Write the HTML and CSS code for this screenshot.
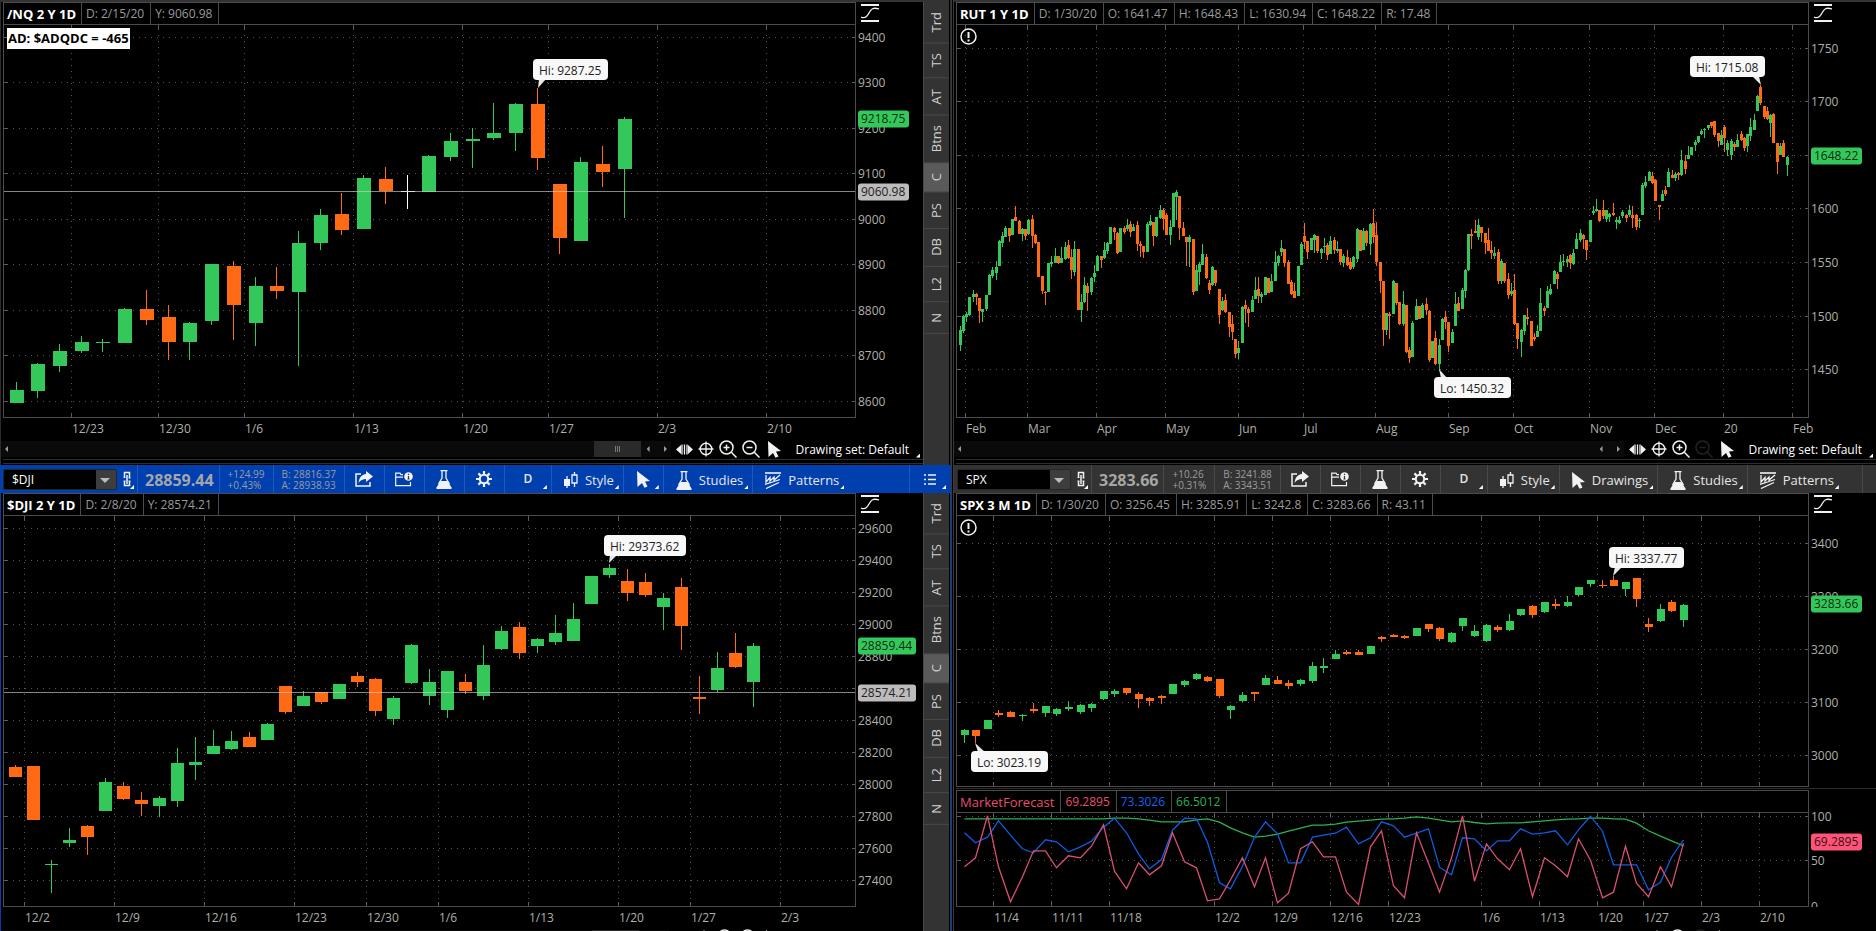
FILE: index.html
```html
<!DOCTYPE html>
<html lang="en">
<head>
<meta charset="utf-8">
<title>Charts</title>
<link rel="stylesheet" href="styles.css">
</head>
<body>
<svg class="symbols" aria-hidden="true">
  <symbol id="i-fit" viewBox="0 0 18 18"><path d="M0 1h18M0 17h18" stroke-width="2"/><path d="M0 13c4 2 6 0 8-4s4-6 10-4" stroke-width="1.3"/></symbol>
  <symbol id="i-link" viewBox="0 0 10 17"><path d="M2.5 6V1.5h5V7M2.5 10v4.500h5V10M5 4v9" stroke-width="1.5"/><path d="M1.500 6.500h2M1.500 10h2M6.500 7h2M6.500 10h2" stroke-width="1"/></symbol>
  <symbol id="i-share" viewBox="0 0 18 16"><path d="M6 3H1v12h14v-4" stroke-width="1.5"/><path class="f" d="M11 0l7 5.500-7 5.500V8C8 8 5.500 9 3.500 12 4 7 6.500 3.500 11 3z"/></symbol>
  <symbol id="i-folder" viewBox="0 0 18 15"><path d="M8 2.700H6L5 1.200H.7v12.500h14.800V10M1 5.200h7" stroke-width="1.200"/><circle class="f" cx="13.500" cy="4.500" r="4.300"/><path class="k" d="M13.500 4v3.500M13.500 1.700V3M12.500 7h2" stroke-width="1.200"/></symbol>
  <symbol id="i-flask" viewBox="0 0 16 19"><path d="M4.500.7h7M6 1v7L2.500 14M10 1v7l3.500 6" stroke-width="1.300"/><path class="f" d="M4.500 11h7l4 6.500V19H.5v-1.500z"/></symbol>
  <symbol id="i-gear" viewBox="0 0 16 16"><circle cx="8" cy="8" r="4.200" stroke-width="2"/><path d="M8 0v3.500M8 12.500V16M0 8h3.500M12.500 8H16M2.400 2.400l2.400 2.400M11.200 11.200l2.400 2.400M13.600 2.400l-2.400 2.400M4.800 11.200l-2.400 2.400" stroke-width="2.200"/></symbol>
  <symbol id="i-candle" viewBox="0 0 14 16"><path class="f" d="M0 7h6v7H0z"/><path d="M3 4v12M10.500 0v3M10.500 11v4M8 3h5v8H8z" stroke-width="1.300"/></symbol>
  <symbol id="i-cursor" viewBox="0 0 13 17"><path class="f" d="M0 0l13 10-5 .5 2.500 5-3 1.300L5 12l-4.500 4z"/></symbol>
  <symbol id="i-pattern" viewBox="0 0 16 17"><path d="M0 1h16" stroke-width="1.600"/><path d="M1 3v7l4-4.500V9l4-4v3l6-5M0 12.500l15-5M1 16.500l13-6" stroke-width="1.300"/></symbol>
  <symbol id="i-list" viewBox="0 0 12 11"><path d="M0 1h2M4 1h8M0 5.500h2M4 5.500h8M0 10h2M4 10h8" stroke-width="1.300"/></symbol>
  <symbol id="i-pan" viewBox="0 0 17 11"><path class="f" d="M0 5.500L5 1v9zM17 5.500L12 1v9z"/><path d="M6 .5v10M8.500 .5v10M11 .5v10" stroke-width="1.300"/></symbol>
  <symbol id="i-target" viewBox="0 0 16 16"><circle cx="8" cy="8" r="5.800" stroke-width="1.400"/><path d="M8 .5v15M.5 8h15" stroke-width="1.300"/></symbol>
  <symbol id="i-plus" viewBox="0 0 18 18"><circle cx="7.500" cy="7.500" r="6.500" stroke-width="1.500"/><path d="M12.300 12.300L17.500 17.500M4.500 7.500h6M7.500 4.500v6" stroke-width="1.500"/></symbol>
  <symbol id="i-minus" viewBox="0 0 18 18"><circle cx="7.500" cy="7.500" r="6.500" stroke-width="1.500"/><path d="M12.300 12.300L17.500 17.500M4.500 7.500h6" stroke-width="1.500"/></symbol>
  <symbol id="i-alert" viewBox="0 0 17 17"><circle cx="8.500" cy="8.500" r="7.500" stroke-width="1.500"/><path d="M8.500 4v6M8.500 11.500v2" stroke-width="2"/></symbol>
</svg>

<main class="desk">
  <section class="panel left">
    <div class="strip"></div>
    <div class="body">
      <div class="chart">
        <div class="head"><b>/NQ 2 Y 1D</b><span>D: 2/15/20</span><span>Y: 9060.98</span></div>
        <button class="fit" aria-label="Fit chart"><svg width="18" height="18"><use href="#i-fit"/></svg></button>
        <div class="plot" data-plot="nq"><strong class="breadth">AD: $ADQDC = -465</strong></div>
        <div class="yaxis" data-y="nq"></div>
        <div class="xaxis" data-x="nq"></div>
      </div>
      <div class="foot">
        <div class="track"><i class="arrow"></i><i class="thumb"></i><i class="arrow"></i><i class="arrow next"></i></div>
        <button class="ft" aria-label="Pan"><svg width="17" height="11"><use href="#i-pan"/></svg></button>
        <button class="ft" aria-label="Crosshair"><svg width="16" height="16"><use href="#i-target"/></svg></button>
        <button class="ft" aria-label="Zoom in"><svg width="18" height="18"><use href="#i-plus"/></svg></button>
        <button class="ft" aria-label="Zoom out"><svg width="18" height="18"><use href="#i-minus"/></svg></button>
        <button class="ft pointer" aria-label="Pointer"><svg width="13" height="17"><use href="#i-cursor"/></svg></button>
        <button class="ft set more">Drawing set: Default</button>
      </div>
    </div>
    <nav class="tabs"><button>Trd</button><button>TS</button><button>AT</button><button>Btns</button><button class="on">C</button><button>PS</button><button>DB</button><button>L2</button><button>N</button></nav>
  </section>

  <section class="panel right">
    <div class="strip"></div>
    <div class="body">
      <div class="chart">
        <div class="head"><b>RUT 1 Y 1D</b><span>D: 1/30/20</span><span>O: 1641.47</span><span>H: 1648.43</span><span>L: 1630.94</span><span>C: 1648.22</span><span>R: 17.48</span></div>
        <button class="fit" aria-label="Fit chart"><svg width="18" height="18"><use href="#i-fit"/></svg></button>
        <div class="plot" data-plot="rut"><svg class="alert" width="17" height="17"><use href="#i-alert"/></svg></div>
        <div class="yaxis" data-y="rut"></div>
        <div class="xaxis" data-x="rut"></div>
      </div>
      <div class="foot">
        <div class="track"><i class="arrow"></i><i class="thumb none"></i><i class="arrow"></i><i class="arrow next"></i></div>
        <button class="ft" aria-label="Pan"><svg width="17" height="11"><use href="#i-pan"/></svg></button>
        <button class="ft" aria-label="Crosshair"><svg width="16" height="16"><use href="#i-target"/></svg></button>
        <button class="ft" aria-label="Zoom in"><svg width="18" height="18"><use href="#i-plus"/></svg></button>
        <button class="ft" aria-label="Zoom out" disabled><svg width="18" height="18"><use href="#i-minus"/></svg></button>
        <button class="ft pointer" aria-label="Pointer"><svg width="13" height="17"><use href="#i-cursor"/></svg></button>
        <button class="ft set more">Drawing set: Default</button>
      </div>
    </div>
  </section>

  <section class="panel left active">
    <div class="bar">
      <label class="symbol"><select aria-label="Symbol"><option>$DJI</option></select></label>
      <button class="link more" aria-label="Link"><svg width="10" height="17"><use href="#i-link"/></svg></button>
      <output class="last">28859.44</output>
      <div class="pair"><span>+124.99</span><span>+0.43%</span></div>
      <div class="pair"><span>B: 28816.37</span><span>A: 28938.93</span></div>
      <button class="ic" aria-label="Share"><svg width="18" height="16"><use href="#i-share"/></svg></button>
      <button class="ic" aria-label="Info"><svg width="18" height="15"><use href="#i-folder"/></svg></button>
      <button class="ic" aria-label="Lab"><svg width="16" height="19"><use href="#i-flask"/></svg></button>
      <button class="ic" aria-label="Settings"><svg width="16" height="16"><use href="#i-gear"/></svg></button>
      <button class="period more">D</button>
      <button class="tool more"><svg width="14" height="16"><use href="#i-candle"/></svg>Style</button>
      <button class="ic more" aria-label="Drawings"><svg width="13" height="17"><use href="#i-cursor"/></svg></button>
      <button class="tool more"><svg width="16" height="19"><use href="#i-flask"/></svg>Studies</button>
      <button class="tool last-tool more"><svg width="16" height="17"><use href="#i-pattern"/></svg>Patterns</button>
      <button class="list more" aria-label="Menu"><svg width="12" height="11"><use href="#i-list"/></svg></button>
    </div>
    <div class="body">
      <div class="chart">
        <div class="head"><b>$DJI 2 Y 1D</b><span>D: 2/8/20</span><span>Y: 28574.21</span></div>
        <button class="fit" aria-label="Fit chart"><svg width="18" height="18"><use href="#i-fit"/></svg></button>
        <div class="plot" data-plot="dji"></div>
        <div class="yaxis" data-y="dji"></div>
        <div class="xaxis" data-x="dji"></div>
      </div>
      <div class="foot">
        <div class="track"><i class="arrow"></i><i class="thumb"></i><i class="arrow"></i><i class="arrow next"></i></div>
        <button class="ft" aria-label="Pan"><svg width="17" height="11"><use href="#i-pan"/></svg></button>
        <button class="ft" aria-label="Crosshair"><svg width="16" height="16"><use href="#i-target"/></svg></button>
        <button class="ft" aria-label="Zoom in"><svg width="18" height="18"><use href="#i-plus"/></svg></button>
        <button class="ft" aria-label="Zoom out"><svg width="18" height="18"><use href="#i-minus"/></svg></button>
        <button class="ft pointer" aria-label="Pointer"><svg width="13" height="17"><use href="#i-cursor"/></svg></button>
      </div>
    </div>
    <nav class="tabs"><button>Trd</button><button>TS</button><button>AT</button><button>Btns</button><button class="on">C</button><button>PS</button><button>DB</button><button>L2</button><button>N</button></nav>
  </section>

  <section class="panel right">
    <div class="bar">
      <label class="symbol"><select aria-label="Symbol"><option>SPX</option></select></label>
      <button class="link more" aria-label="Link"><svg width="10" height="17"><use href="#i-link"/></svg></button>
      <output class="last">3283.66</output>
      <div class="pair"><span>+10.26</span><span>+0.31%</span></div>
      <div class="pair"><span>B: 3241.88</span><span>A: 3343.51</span></div>
      <button class="ic" aria-label="Share"><svg width="18" height="16"><use href="#i-share"/></svg></button>
      <button class="ic" aria-label="Info"><svg width="18" height="15"><use href="#i-folder"/></svg></button>
      <button class="ic" aria-label="Lab"><svg width="16" height="19"><use href="#i-flask"/></svg></button>
      <button class="ic" aria-label="Settings"><svg width="16" height="16"><use href="#i-gear"/></svg></button>
      <button class="period more">D</button>
      <button class="tool more"><svg width="14" height="16"><use href="#i-candle"/></svg>Style</button>
      <button class="tool more"><svg width="13" height="17"><use href="#i-cursor"/></svg>Drawings</button>
      <button class="tool more"><svg width="16" height="19"><use href="#i-flask"/></svg>Studies</button>
      <button class="tool last-tool more"><svg width="16" height="17"><use href="#i-pattern"/></svg>Patterns</button>
      <span class="end"></span>
    </div>
    <div class="body">
      <div class="chart split">
        <div class="head"><b>SPX 3 M 1D</b><span>D: 1/30/20</span><span>O: 3256.45</span><span>H: 3285.91</span><span>L: 3242.8</span><span>C: 3283.66</span><span>R: 43.11</span></div>
        <button class="fit" aria-label="Fit chart"><svg width="18" height="18"><use href="#i-fit"/></svg></button>
        <div class="plot" data-plot="spx"><svg class="alert" width="17" height="17"><use href="#i-alert"/></svg></div>
        <div class="yaxis" data-y="spx"></div>
        <div class="divider"></div>
        <div class="head sub"><span class="pink study">MarketForecast</span><span class="pink">69.2895</span><span class="blue">73.3026</span><span class="green">66.5012</span></div>
        <div></div>
        <div class="plot" data-plot="mf"></div>
        <div class="yaxis clip" data-y="mf"></div>
        <div class="xaxis" data-x="spx"></div>
      </div>
      <div class="foot">
        <div class="track"><i class="arrow"></i><i class="thumb none"></i><i class="arrow"></i><i class="arrow next"></i></div>
        <button class="ft" aria-label="Pan"><svg width="17" height="11"><use href="#i-pan"/></svg></button>
        <button class="ft" aria-label="Crosshair"><svg width="16" height="16"><use href="#i-target"/></svg></button>
        <button class="ft" aria-label="Zoom in"><svg width="18" height="18"><use href="#i-plus"/></svg></button>
        <button class="ft" aria-label="Zoom out" disabled><svg width="18" height="18"><use href="#i-minus"/></svg></button>
        <button class="ft pointer" aria-label="Pointer"><svg width="13" height="17"><use href="#i-cursor"/></svg></button>
      </div>
    </div>
  </section>
</main>
<script src="charts.js"></script>
</body>
</html>
```

FILE: styles.css
```css
* { box-sizing: border-box; }

:root {
  --line: #4c4c4c;
  --green: #34c85a;
  --pink: #ff5478;
}

body {
  margin: 0;
  height: 100vh;
  overflow: hidden;
  background: #000;
  color: #fff;
  font: 12px/16px "Open Sans", "Noto Sans", sans-serif;
}

button {
  position: relative;
  margin: 0;
  padding: 0;
  border: 0;
  background: none;
  color: inherit;
  font: inherit;
}

svg { display: block; }
.symbols { position: absolute; width: 0; height: 0; }
symbol path, symbol circle { fill: none; stroke: #f2f2f2; }
symbol .f { fill: #f2f2f2; stroke: none; }
symbol .k { stroke: #333; }

.desk {
  display: grid;
  grid-template-columns: 951fr 925fr;
  grid-template-rows: 465fr 489fr;
  height: calc(100vh + 23px);
}

.panel {
  display: grid;
  grid-template-rows: auto minmax(0, 1fr);
  grid-template-columns: minmax(0, 1fr) auto;
  min-width: 0;
  min-height: 0;
}
.panel.left { border: solid #2c2c2c; border-width: 0 1px; padding: 0 1px 0 2px; }
.panel.right { border-left: 3px double #3a3a3a; padding-left: 2px; }
.panel.active { border-color: #003fae; }

.strip, .bar { grid-column: 1 / -1; margin-left: -2px; }
.strip { height: 2px; background: #333; }

/* toolbar */
.bar {
  display: flex;
  align-items: stretch;
  height: 28px;
  padding-left: 3px;
  background: #333;
  color: #e6e6e6;
}
.active .bar { margin-right: -1px; padding-left: 2px; background: #003fae; }
.bar > * + * + * { border-left: 1px solid #484848; }
.active .bar > * + * + * { border-left-color: #1c58bd; }
.bar > button { display: flex; align-items: center; justify-content: center; font-size: 13px; }

.symbol { position: relative; width: 114px; padding: 4px 0 3px; }
.symbol select {
  width: 100%;
  height: 21px;
  padding: 0 24px 0 8px;
  border: 1px solid #262626;
  border-radius: 2px;
  appearance: none;
  background: #000;
  color: #fff;
  font: inherit;
}
.symbol::before {
  content: "";
  position: absolute;
  top: 5px;
  right: 1px;
  width: 20px;
  height: 19px;
  background: #3d3d3d;
}
.symbol::after {
  content: "";
  position: absolute;
  top: 13px;
  right: 7px;
  border: 5px solid transparent;
  border-top-color: #bbb;
  border-bottom: 0;
}
.link { width: 20px; }
.last { padding: 0 5px 0 7px; color: #a6a6a6; font-size: 16px; font-weight: 700; line-height: 30px; }
.pair { display: flex; flex-direction: column; justify-content: center; padding: 2px 8px 0; color: #9c9c9c; font-size: 10px; line-height: 11px; }
.ic { width: 40px; }
.bar > .period { width: 47px; font-size: 12px; font-weight: 600; }
.tool { gap: 7px; padding: 2px 9px 0 12px; }
.tool.last-tool { margin-right: auto; }
.list { width: 41px; }
.end { width: 14px; }

.more::after {
  content: "";
  position: absolute;
  right: 4px;
  bottom: 4px;
  width: 4px;
  height: 4px;
  background: #fff;
  clip-path: polygon(100% 0, 100% 100%, 0 100%);
}
.link.more::after { right: 3px; }

/* chart */
.body { display: flex; flex-direction: column; min-height: 0; padding-bottom: 8px; position: relative; }
.body::after {
  content: "";
  position: absolute;
  inset: auto 0 1px 0;
  height: 3px;
  border: solid #2e2e2e;
  border-width: 1px 0;
}
.chart {
  flex: 1;
  display: grid;
  grid-template-columns: minmax(0, 1fr) 67px;
  grid-template-rows: 22px minmax(0, 1fr) 23px;
  min-height: 0;
}
.chart.split { grid-template-rows: 22px minmax(0, 272fr) 3px 22px minmax(0, 95fr) 23px; }
.head {
  display: flex;
  border: 1px solid var(--line);
  border-bottom: 0;
  color: #9a9a9a;
  line-height: 22px;
}
.head > * { padding: 0 6px 0 4px; border-right: 1px solid var(--line); }
.head b { padding: 0 5px 0 3px; color: #fff; font-size: 13px; }
.head .study { padding-left: 3px; font-size: 13px; }
.pink { color: #e84d70; }
.blue { color: #1264ee; }
.green { color: #2db14f; }
.fit { justify-self: start; margin: 2px 0 0 5px; height: 18px; }
.divider { grid-column: 1 / -1; border-top: 1px solid #000; background: #2a2a2a; background-clip: content-box; padding-bottom: 1px; }

.plot, .yaxis, .xaxis { position: relative; min-height: 0; }
.plot > .canvas { width: 100%; height: 100%; }
.xaxis { grid-column: 1 / -1; color: #aeb0aa; }
.yaxis { color: #aeb0aa; }
.yaxis.clip { clip-path: inset(-12px 0 0 0); }
.yaxis span { position: absolute; left: 2px; transform: translateY(-50%); }
.xaxis .scale { position: relative; margin-right: 67px; }
.xaxis .scale span { position: absolute; top: 3px; white-space: nowrap; }
.yaxis .tag {
  height: 17px;
  padding: 0 4px 0 3px;
  border-radius: 3px;
  background: var(--green);
  color: #0b2c14;
}
.yaxis .tag.grey { background: #bdbbbc; color: #222; }
.yaxis .tag.rose { background: var(--pink); color: #33101a; }

.balloon {
  position: absolute;
  height: 21px;
  padding: 0 7px 0 6px;
  border-radius: 4px;
  background: #f8f8f8;
  color: #222;
  line-height: 24px;
  white-space: nowrap;
}
.breadth { position: absolute; left: 4px; top: 4px; padding: 0 1px; background: #fff; color: #000; font-size: 13px; line-height: 21px; }
.alert { position: absolute; left: 4px; top: 4px; }

.canvas * { shape-rendering: crispEdges; }
.canvas .frame { fill: none; stroke: var(--line); }
.canvas .grid { fill: none; stroke: #565656; stroke-dasharray: 1 5; }
.canvas .tick { fill: none; stroke: #5c5c5c; }
.canvas .cross { stroke: #ccc; stroke-opacity: .65; }
.canvas .g { fill: var(--green); }
.canvas .o { fill: #ff6a14; }
.canvas .w { fill: #fff; }
.canvas .tail { fill: #e8e8e8; shape-rendering: auto; }
.canvas polyline { fill: none; shape-rendering: auto; stroke-width: 1.3; }

/* bottom strip */
.foot { display: flex; align-items: center; gap: 5px; height: 16px; padding-right: 3px; }
.track { flex: 1; display: flex; align-items: center; height: 16px; margin-left: -2px; padding: 0 4px 0 4px; background: #0a0a0a; }
.track .arrow { width: 3px; height: 6px; margin-right: 14px; background: #9a9a9a; clip-path: polygon(0 50%, 100% 0, 100% 100%); }
.track .next { margin: 0; transform: scaleX(-1); }
.track .thumb {
  width: 47px;
  height: 16px;
  margin: 0 6px 0 auto;
  background: linear-gradient(#777, #777) 21px 5px / 1px 6px no-repeat,
    linear-gradient(#777, #777) 23px 5px / 1px 6px no-repeat,
    linear-gradient(#777, #777) 25px 5px / 1px 6px no-repeat, #2a2a2a;
}
.track .thumb.none { background: none; }
.ft:disabled { opacity: .14; }
.pointer { margin-left: 3px; }
.pointer:last-child { margin-right: 141px; }
.ft.set { margin-left: 10px; padding: 1px 11px 0 0; }
.ft.set::after { right: 0; bottom: 0; }

/* side tabs */
.tabs { display: flex; flex-direction: column; width: 26px; border-left: 1px solid #484848; background: #333; color: #d2d2d2; font-size: 13px; }
.tabs button {
  padding: 10px 4px 10px 5px;
  border-top: 1px solid #4a4a4a;
  writing-mode: vertical-rl;
  transform: rotate(180deg);
  text-align: center;
}
.tabs .on { background: #5a5a5a; }
```

FILE: charts.js
```js
// Candle rows: colour, high, body top, body bottom, low (y units of the chart).
const charts = {
  nq: {
    box: [3, 24, 853, 394], cross: 191,
    body: { width: 14, offset: 6 },
    x: i => Math.floor(16.1 + i * 21.72),
    y: v => v,
    v: { '12/23': 71, '12/30': 158, '1/6': 244, '1/13': 353, '1/20': 462, '1/27': 548, '2/3': 657, '2/10': 766 },
    h: { 9400: 37, 9300: 82, 9200: 128, 9100: 173, 9000: 219, 8900: 264, 8800: 310, 8700: 355, 8600: 401 },
    tags: [['9218.75', 118, ''], ['9060.98', 191, 'grey']],
    notes: [{ text: 'Hi: 9287.25', at: [533, 59], tail: '538,88 539,79 546,79' }],
    data: `g 382 390 403 403|g 363 364 391 398|g 344 351 366 372|g 336 342 351 353|g 339 342 343 352|g 308 309 343 343
o 290 309 320 325|o 305 317 342 360|g 322 323 342 360|g 264 264 321 325|o 261 266 305 340|g 277 286 323 346|o 267 286 291 299
g 231 243 292 366|g 209 215 243 250|o 193 214 230 235|g 175 178 229 229|o 167 179 191 204|w 175 191 192 209|g 155 156 192 192
g 133 141 157 161|g 128 139 141 168|g 103 133 138 140|g 103 104 133 151|o 88 104 158 170|o 184 184 238 254|g 157 162 241 241
o 146 164 172 187|g 117 119 169 218`
  },
  dji: {
    box: [3, 515, 853, 392], cross: 692,
    body: { width: 13, offset: 6 },
    x: i => 15 + i * 18,
    y: v => v,
    v: { '12/2': 24, '12/9': 114, '12/16': 204, '12/23': 294, '12/30': 366, '1/6': 438, '1/13': 528, '1/20': 618, '1/27': 690, '2/3': 780 },
    h: { 29600: 528, 29400: 560, 29200: 592, 29000: 624, 28800: 656, 28600: 688, 28400: 720, 28200: 752, 28000: 784, 27800: 816, 27600: 848, 27400: 880 },
    tags: [['28859.44', 645, ''], ['28574.21', 692, 'grey']],
    notes: [{ text: 'Hi: 29373.62', at: [604, 535], tail: '609,563 610,555 617,555' }],
    data: `o 765 767 777 777|o 766 766 820 820|g 860 864 865 893|g 828 840 843 847|o 825 826 837 855|g 778 782 811 811|o 782 786 799 800
o 792 800 804 816|g 796 798 806 817|g 748 763 801 807|g 737 762 765 780|g 730 746 754 754|g 731 741 749 750|o 732 737 747 747
g 723 724 740 740|o 686 686 712 714|g 691 696 706 706|o 692 692 702 704|g 684 684 699 699|o 672 676 682 687|o 678 679 711 716
g 696 698 719 725|g 644 645 683 684|g 669 682 696 705|g 671 671 710 718|o 674 682 691 694|g 645 665 696 700|g 626 631 649 650
o 622 627 653 659|g 638 639 646 653|g 615 633 642 645|g 603 619 641 641|g 576 576 604 604|g 564 568 575 578|o 569 581 593 601
o 573 582 595 597|g 593 598 607 630|o 578 587 626 650|o 676 697 699 714|g 652 668 690 692|o 633 653 667 668|g 643 646 682 707`
  },
  spx: {
    box: [956, 515, 853, 272],
    body: { width: 8, offset: 3 },
    x: i => Math.floor(964.01 + i * 11.6),
    y: v => v,
    v: { '11/4': 993, '11/11': 1051, '11/18': 1109, '12/2': 1214, '12/9': 1272, '12/16': 1330, '12/23': 1388, '1/6': 1481, '1/13': 1539, '1/20': 1597, '1/27': 1643, '2/3': 1701, '2/10': 1759 },
    h: { 3400: 543, 3300: 596, 3200: 649, 3100: 702, 3000: 755 },
    tags: [['3283.66', 604, '']],
    notes: [
      { text: 'Hi: 3337.77', at: [1609, 547], tail: '1613,576 1615,567 1622,567' },
      { text: 'Lo: 3023.19', at: [971, 751], tail: '975,743 978,752 985,752' }
    ],
    data: `g 729 730 735 743|o 730 730 736 743|g 720 720 729 729|o 710 713 715 717|o 711 712 717 717|g 714 715 716 721|o 703 709 711 713
g 706 706 713 717|g 708 709 714 716|g 701 707 709 711|g 704 705 712 714|g 703 704 708 712|g 691 691 699 700|g 689 691 694 697
o 688 688 693 695|o 692 694 699 708|o 697 698 701 706|o 695 696 698 704|g 684 684 694 694|g 680 681 685 687|g 673 674 679 680
o 676 677 681 682|o 679 679 696 698|g 705 706 710 719|g 692 695 701 702|o 692 692 694 701|g 675 678 685 685|o 676 680 684 684
o 680 683 686 689|g 679 680 684 686|g 662 666 681 683|g 658 666 668 673|g 650 654 659 659|o 650 652 654 655|o 650 652 655 655
g 646 646 654 654|o 636 637 639 642|o 634 635 637 637|o 635 636 638 639|g 628 628 636 636|o 624 624 629 632|o 627 628 639 641
g 632 633 642 643|g 618 618 626 631|g 625 631 636 637|g 624 625 641 642|o 625 627 630 632|g 614 621 630 631|g 609 609 615 616
o 605 606 615 618|g 602 602 612 613|o 599 604 606 609|g 596 602 606 607|g 587 587 595 596|g 580 580 584 587|o 580 585 586 588
o 576 580 586 586|g 582 582 589 596|o 578 578 599 607|o 618 624 627 632|g 604 609 621 622|o 600 602 611 612|g 604 605 620 627`
  },
  mf: {
    box: [956, 812, 853, 95],
    v: null,
    h: { 100: 816, 50: 860, 0: 906 },
    tags: [['69.2895', 841, 'rose']],
    notes: [],
    y: v => 460.5 + v / 3,
    x: i => Math.floor(964.01 + i * 11.6) + 0.5,
    lines: {
      '#2db14f': [1075,1075,1075,1075,1075,1075,1075,1075,1075,1075,1075,1075,1075,1073,1073,1075,1079,1084,1084,1084,1078,1075,1085,1102,1117,1130,1127,1121,1112,1103,1094,1094,1091,1085,1082,1079,1076,1075,1073,1069,1073,1078,1084,1081,1086,1090,1088,1087,1087,1084,1081,1078,1076,1075,1073,1073,1075,1076,1088,1111,1127,1141,1156],
      '#0f5ce0': [1117,1147,1130,1081,1124,1165,1177,1138,1144,1174,1159,1142,1100,1073,1117,1180,1225,1197,1109,1073,1075,1145,1267,1285,1217,1130,1084,1120,1207,1207,1130,1124,1118,1100,1150,1132,1084,1096,1130,1118,1105,1220,1243,1132,1135,1171,1141,1141,1105,1121,1117,1111,1153,1108,1067,1112,1213,1213,1213,1288,1265,1190,1138],
      '#d9506f': [1219,1192,1066,1219,1324,1249,1171,1171,1222,1186,1192,1157,1093,1232,1285,1207,1243,1216,1117,1204,1222,1321,1315,1258,1192,1279,1192,1327,1298,1165,1144,1189,1189,1295,1332,1159,1111,1276,1312,1117,1208,1295,1192,1066,1262,1150,1195,1228,1165,1309,1192,1216,1249,1135,1199,1312,1295,1157,1268,1309,1219,1279,1148]
    }
  },
  rut: {
    box: [956, 24, 853, 394],
    body: { width: 3, offset: 1 },
    x: i => Math.floor(960.01 + i * 827 / 252),
    v: { 'Feb': 965, 'Mar': 1027, 'Apr': 1096, 'May': 1165, 'Jun': 1238, 'Jul': 1303, 'Aug': 1375, 'Sep': 1448, 'Oct': 1513, 'Nov': 1589, 'Dec': 1654, '20 ': 1723, 'Feb ': 1792 },
    h: { 1750: 48, 1700: 101, 1650: 155, 1600: 208, 1550: 262, 1500: 316, 1450: 369 },
    tags: [['1648.22', 156, '']],
    notes: [
      { text: 'Hi: 1715.08', at: [1690, 56], tail: '1761,85 1752,76 1759,76' },
      { text: 'Lo: 1450.32', at: [1434, 377], tail: '1439,369 1441,378 1447,378' }
    ],
    // Each block starts at its own base line; values are in thirds of a unit.
    blocks: [
      [180, `g 438 450 495 512|g 405 408 453 458|g 395 402 411 425|g 350 351 405 408|g 330 342 351 367|o 340 342 351 375|o 354 354 393 428|g 387 387 396 425
g 345 345 387 392|g 282 285 345 346|g 262 270 288 293|g 244 261 279 299|g 180 183 258 258|g 156 168 189 200|g 138 144 171 171|o 144 144 168 186
g 117 117 165 165|o 78 111 123 123|o 120 123 162 162|g 144 147 162 182|o 147 147 168 179|g 117 120 162 165|o 105 117 168 203|o 162 165 189 192
o 186 186 291 291|o 288 288 333 341|o 334 336 339 374|g 249 249 336 336|g 228 246 252 262|g 205 228 249 249|o 228 228 249 251|g 202 234 249 249
g 186 201 237 239|o 180 195 234 238|o 208 231 270 296|g 184 207 276 287|o 207 207 390 390|g 342 366 390 425|g 291 315 366 368|o 310 318 339 392
g 292 294 336 344|g 255 279 291 305|g 225 228 273 273|o 228 228 240 263|g 187 210 234 236|g 186 189 213 221|g 141 141 192 192|o 141 144 156 180
o 157 159 219 221|g 144 144 216 216|o 138 144 156 161|g 117 135 147 152|o 123 132 156 171|g 132 141 153 154|o 123 135 192 212|o 183 192 198 230
o 198 198 216 234|g 127 132 216 216|g 105 123 135 137|o 126 126 168 197|g 111 111 168 170|g 75 90 114 116|o 84 90 117 149|o 100 105 165 165
g 120 141 165 194`],
      [190, `g 8 9 111 111|g -1 6 21 91|o 18 18 114 149|o 97 114 138 138|o 140 141 156 227|g 136 141 156 230|o 147 147 306 314|g 225 240 303 304
g 216 222 246 284|g 162 192 225 225|o 192 201 264 266|o 270 279 300 311|g 228 231 285 287|o 240 240 279 287|o 297 297 375 401|g 322 333 360 363
o 313 330 366 368|o 366 366 411 440|o 376 402 426 449|o 447 447 492 503|g 453 474 489 506|g 348 351 459 459|o 330 345 357 398|o 350 357 369 410
g 318 330 366 366|g 262 300 327 327|o 261 297 318 339|g 306 312 321 338|g 261 261 315 315|o 264 264 309 309|g 253 273 306 306|g 184 216 273 273
g 195 198 219 227|g 150 174 186 198|o 177 177 219 230|o 210 216 282 282|o 271 276 312 314|o 280 303 324 324|g 228 228 318 318|g 157 162 225 225
o 99 138 156 176|o 153 153 186 208|g 144 144 180 180|g 132 135 150 188|o 138 138 183 188|g 175 177 189 206|g 144 168 171 188|o 158 165 195 211
g 138 153 192 192|o 141 150 180 191|g 154 177 183 190|o 177 177 216 224|g 192 198 219 230|o 181 201 225 229|o 205 216 237 239|g 198 201 231 236
g 114 117 207 215|o 120 120 183 183|g 114 123 180 180|o 120 123 159 168|g 99 102 162 194|o 58 99 141 158|o 96 135 216 229|o 216 216 273 308
o 273 273 420 467|g 369 369 420 434|o 366 372 378 448|g 270 273 372 372|o 278 279 339 346|o 336 336 402 405|g 304 342 402 409|o 345 345 486 490
o 472 480 504 520|g 393 399 501 501|g 327 348 390 390|o 348 348 387 387|g 339 345 384 385|o 324 342 360 376|o 360 363 510 517|g 453 453 504 504
o 424 444 522 524|g 447 465 522 542|g 383 387 450 450|o 364 381 396 416|o 396 396 468 485|g 417 426 459 459|g 307 342 408 408|o 320 339 363 363
g 295 300 357 357|g 237 240 303 325|g 132 132 240 243|o 118 132 138 176|o 90 123 129 130|g 88 105 141 151|o 111 111 129 155|o 129 129 159 193
o 114 150 183 183|o 154 180 189 207|g 172 189 198 207|o 178 186 273 281|g 208 213 273 281|o 219 219 273 278|o 250 267 315 328|g 280 303 312 319
o 252 300 402 406|o 399 399 447 478|g 417 420 456 500|g 375 375 423 435|o 354 381 387 405|o 393 393 468 468|o 430 441 447 452|g 406 423 441 441
g 295 339 423 423|o 349 354 363 378|g 287 303 354 354|g 282 297 312 314|g 240 243 282 282|o 246 252 267 296|g 196 216 246 246|g 193 213 216 227
g 199 207 216 230|o 193 195 219 236|g 178 189 222 224|g 130 147 177 177|g 117 129 150 155|o 133 135 147 178|o 150 150 180 209|g 90 90 156 156`],
      [75, `g 394 408 414 420|g 372 402 408 410|o 405 405 438 442|o 376 405 423 432|g 405 405 432 441|g 414 417 426 440|o 384 414 420 424|g 426 435 441 463
g 422 435 444 446|g 405 411 423 429|o 417 420 429 440|g 390 405 420 427|o 394 420 429 460|o 416 420 456 464|g 430 435 438 460|g 325 330 420 420
g 304 321 333 340|g 288 291 318 318|o 292 303 324 326|o 312 315 378 378|o 390 390 396 434|g 344 357 378 378|o 333 345 357 364|g 280 291 336 336
o 285 300 309 309|g 292 297 309 317|o 292 294 300 316|g 226 255 300 304|o 240 258 282 296|g 213 240 252 252|g 216 216 240 240|g 196 201 210 227
g 183 183 201 203|g 163 168 177 181|g 160 162 165 188|g 150 150 159 165|o 141 141 153 160|o 138 138 180 186|o 174 174 198 217|g 165 180 210 210
o 150 156 189 230|g 196 204 225 243|g 193 198 240 256|o 201 207 216 228|g 178 195 216 216|o 168 177 195 197|o 186 189 219 229|g 177 177 213 232
g 129 156 183 199|g 118 135 165 166|g 60 63 108 108|o 31 36 84 89|o 93 93 126 132|o 96 108 132 135|g 118 120 144 187|o 114 117 204 204
o 204 204 261 298|g 205 213 240 240|o 195 204 246 246|g 243 246 270 302`]
    ]
  }
};
charts.mf.v = charts.spx.v;

function parse(text, y) {
  return text.split(/[|\n]/).map(row => {
    const [kind, ...values] = row.trim().split(' ');
    return [kind, ...values.map(v => y(Number(v)))];
  });
}

function candles(c) {
  if (c.blocks) {
    return c.blocks.flatMap(([base, text]) => parse(text, v => base + Math.round(v / 3)));
  }
  return c.data ? parse(c.data, c.y) : [];
}

function draw(c) {
  const [bx, by, bw, bh] = c.box;
  const right = bx + bw, bottom = by + bh;
  let s = '';
  for (const x of Object.values(c.v)) {
    s += `<path class="grid" d="M${x + .5} ${by + 5}V${bottom - 5}"/>`;
    s += `<path class="tick" d="M${x + .5} ${by}v5M${x + .5} ${bottom}v-5"/>`;
  }
  for (const y of Object.values(c.h)) {
    s += `<path class="grid" d="M${bx + 4} ${y + .5}H${right - 5}"/>`;
    s += `<path class="tick" d="M${bx} ${y + .5}h5M${right} ${y + .5}h-4"/>`;
  }
  candles(c).forEach(([k, hi, top, low, lo], i) => {
    const x = c.x(i);
    s += `<rect class="${k}" x="${x}" y="${hi}" width="1" height="${Math.max(1, lo - hi)}"/>`;
    s += `<rect class="${k}" x="${x - c.body.offset}" y="${top}" width="${c.body.width}" height="${Math.max(1, low - top)}"/>`;
  });
  for (const [color, values] of Object.entries(c.lines || {})) {
    s += `<polyline stroke="${color}" points="${values.map((v, i) => c.x(i) + ',' + c.y(v).toFixed(1)).join(' ')}"/>`;
  }
  if (c.cross) s += `<path class="cross" d="M${bx} ${c.cross + .5}H${right}"/>`;
  for (const n of c.notes) s += `<polygon class="tail" points="${n.tail}"/>`;
  s += `<rect class="frame" x="${bx + .5}" y="${by + .5}" width="${bw - 1}" height="${bh - 1}"/>`;
  return `<svg class="canvas" viewBox="${c.box.join(' ')}" preserveAspectRatio="none">${s}</svg>`;
}

for (const [name, c] of Object.entries(charts)) {
  const [bx, by, bw, bh] = c.box;
  const left = x => `left:${((x - bx) / bw * 100).toFixed(3)}%`;
  const top = y => `top:${((y - by) / bh * 100).toFixed(3)}%`;
  const plot = document.querySelector(`[data-plot="${name}"]`);
  plot.insertAdjacentHTML('afterbegin', draw(c));
  plot.insertAdjacentHTML('beforeend', c.notes.map(n =>
    `<span class="balloon" style="${left(n.at[0])};${top(n.at[1])}">${n.text}</span>`).join(''));

  const hidden = y => c.tags.some(t => Math.abs(t[1] - y) < 6);
  document.querySelector(`[data-y="${name}"]`).innerHTML =
    Object.entries(c.h).filter(([, y]) => !hidden(y)).sort((a, b) => a[1] - b[1])
      .map(([t, y]) => `<span style="${top(y + 1)}">${t}</span>`).join('') +
    c.tags.map(([t, y, k]) => `<span class="tag ${k}" style="${top(y + .5)}">${t}</span>`).join('');

  const xaxis = document.querySelector(`[data-x="${name}"]`);
  if (xaxis) {
    xaxis.innerHTML = '<div class="scale">' + Object.entries(c.v)
      .map(([t, x]) => `<span style="${left(x + 1)}">${t.trim()}</span>`).join('') + '</div>';
  }
}
```
